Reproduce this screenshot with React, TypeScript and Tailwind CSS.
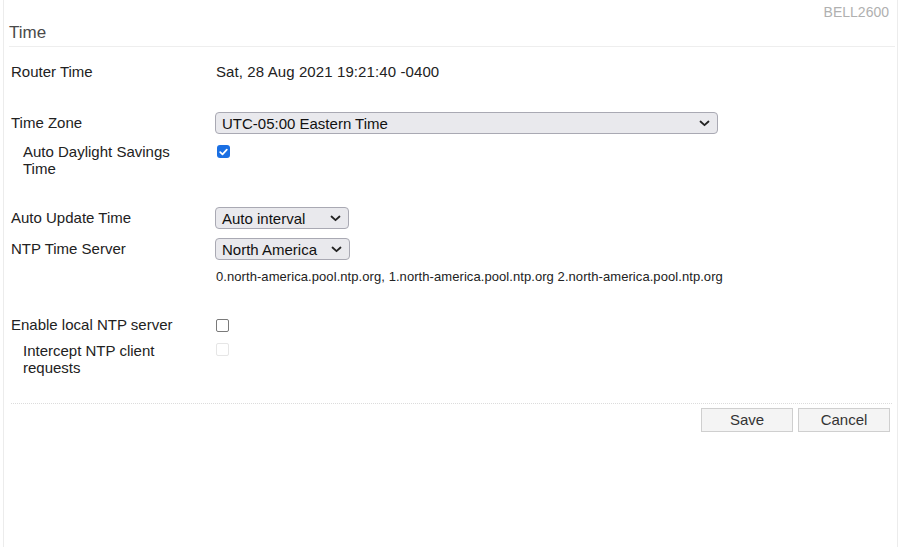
import React from "react";

const font = { fontFamily: '"Liberation Sans", Arial, sans-serif' };

function Chevron() {
  return (
    <svg width="11" height="7" viewBox="0 0 11 7" className="shrink-0">
      <path d="M1.5 1.5 L5.5 5.2 L9.5 1.5" fill="none" stroke="#222" strokeWidth="1.8" strokeLinecap="round" strokeLinejoin="round" />
    </svg>
  );
}

function Select({ value, width }: { value: string; width: string }) {
  return (
    <div className={`${width} h-[22px] flex items-center justify-between pl-[6px] pr-[7px] rounded-[4px] border border-[#a9a9b3] bg-[#e9e9ed] text-[15px] text-[#111]`}>
      <span className="leading-none">{value}</span>
      <Chevron />
    </div>
  );
}

function Checkbox({ checked, disabled }: { checked?: boolean; disabled?: boolean }) {
  if (checked)
    return (
      <div className="w-[13px] h-[13px] rounded-[3px] bg-[#1a6fe3] flex items-center justify-center">
        <svg width="9" height="8" viewBox="0 0 9 8">
          <path d="M1.2 4.2 L3.5 6.4 L7.8 1.6" fill="none" stroke="#fff" strokeWidth="1.7" strokeLinecap="round" strokeLinejoin="round" />
        </svg>
      </div>
    );
  return (
    <div
      className={`w-[13px] h-[13px] rounded-[2px] bg-white border-[1.5px] ${disabled ? "border-[#e6e6e6]" : "border-[#7a7a7a]"}`}
    />
  );
}

export default function App() {
  return (
    <div className="w-[900px] h-[547px] bg-white overflow-hidden" style={font}>
      <div className="ml-[3px] w-[895px] h-full border-l border-r border-[#ececec]">
        {/* header */}
        <div className="text-right pr-[8px] text-[14px] leading-[24px] text-[#b0b0b0]">BELL2600</div>
        <div className="ml-[5px] mr-[2px] border-b border-[#eeeeee] pb-[5px]">
          <div className="text-[17px] leading-[17px] text-[#4a4a4a]">Time</div>
        </div>

        <div className="pl-[7px] text-[15px] text-[#222]">
          {/* Router time */}
          <div className="mt-[15px] flex items-center h-[20px]">
            <div className="w-[205px]">Router Time</div>
            <div className="tracking-[0.1px]">Sat, 28 Aug 2021 19:21:40 -0400</div>
          </div>

          {/* Time zone */}
          <div className="mt-[30px] flex items-center h-[22px]">
            <div className="w-[204px]">Time Zone</div>
            <Select value="UTC-05:00 Eastern Time" width="w-[503px]" />
          </div>
          <div className="mt-[9px] flex">
            <div className="w-[206px] pl-[12px] leading-[17px]">
              Auto Daylight Savings
              <br />
              Time
            </div>
            <div className="pt-[2px]">
              <Checkbox checked />
            </div>
          </div>

          {/* Auto update */}
          <div className="mt-[30px] flex items-center h-[22px]">
            <div className="w-[204px]">Auto Update Time</div>
            <Select value="Auto interval" width="w-[134px]" />
          </div>
          <div className="mt-[9px] flex items-center h-[22px]">
            <div className="w-[204px]">NTP Time Server</div>
            <Select value="North America" width="w-[135px]" />
          </div>
          <div className="mt-[9px] pl-[205px] text-[13px] leading-[16px] tracking-[0.07px] text-[#222]">
            0.north-america.pool.ntp.org, 1.north-america.pool.ntp.org 2.north-america.pool.ntp.org
          </div>

          {/* Local NTP */}
          <div className="mt-[30px] flex items-center h-[20px]">
            <div className="w-[205px]">Enable local NTP server</div>
            <Checkbox />
          </div>
          <div className="mt-[7px] flex">
            <div className="w-[205px] pl-[12px] leading-[17px]">
              Intercept NTP client
              <br />
              requests
            </div>
            <div className="pt-[1px]">
              <Checkbox disabled />
            </div>
          </div>
        </div>

        {/* footer */}
        <div className="mt-[27px] ml-[7px] mr-[5px] border-t border-dotted border-[#dcdcdc]" />
        <div className="mt-[4px] flex justify-end gap-[5px] pr-[7px]">
          <button className="w-[92px] h-[24px] bg-[#f4f4f4] border border-[#cfcfcf] text-[15px] text-[#333]">Save</button>
          <button className="w-[92px] h-[24px] bg-[#f4f4f4] border border-[#cfcfcf] text-[15px] text-[#333]">Cancel</button>
        </div>
      </div>
    </div>
  );
}
